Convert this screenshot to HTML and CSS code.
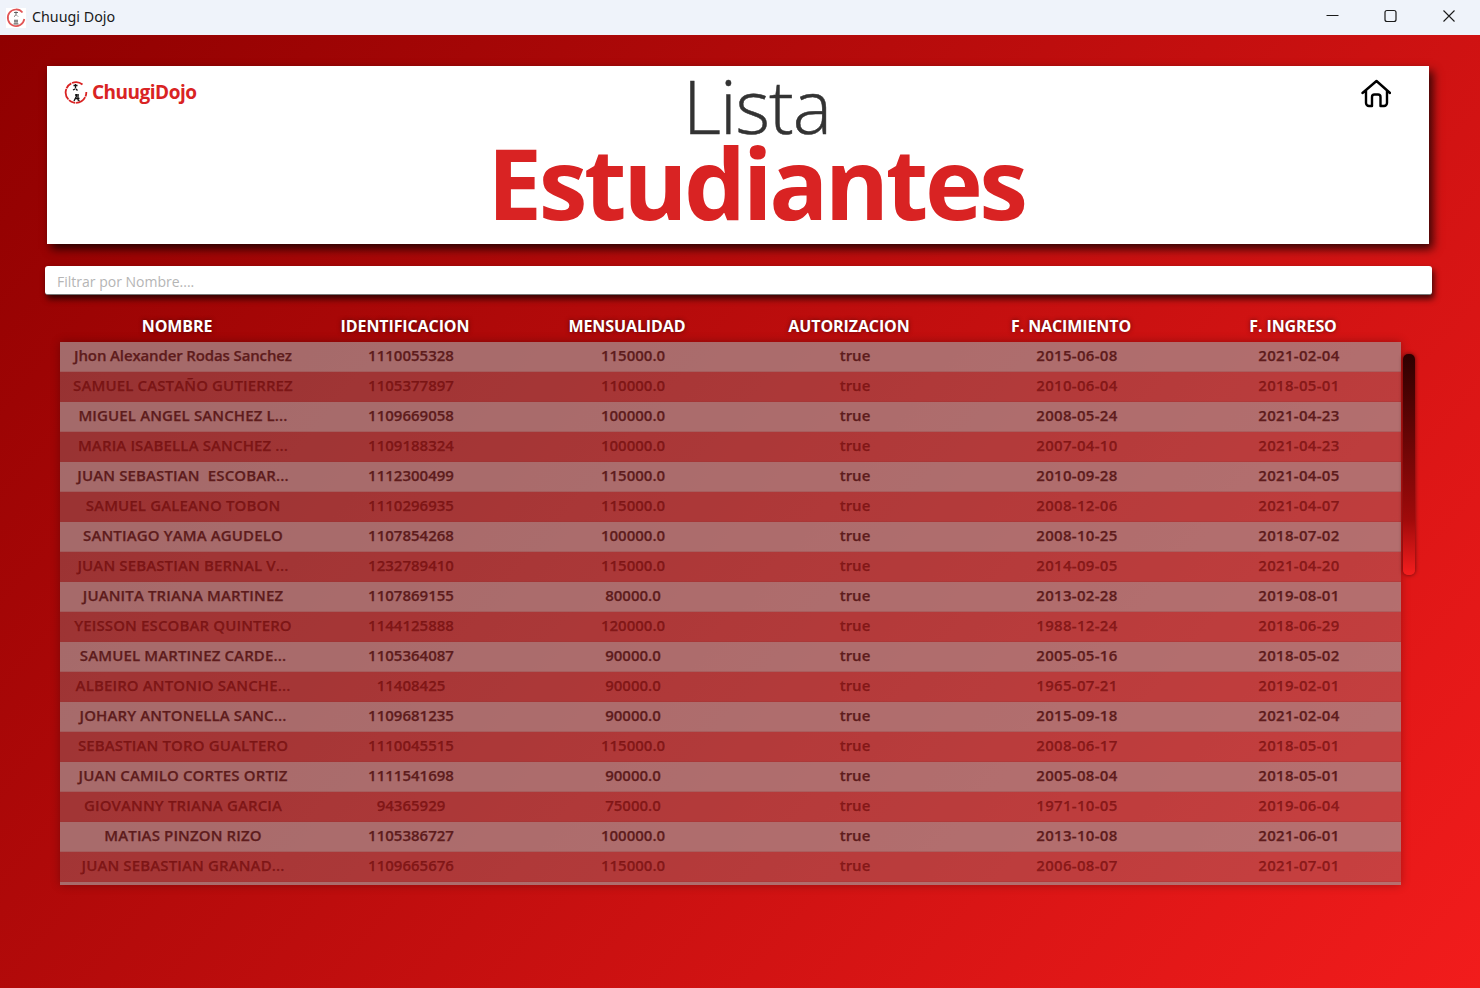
FILE: index.html
```html
<!DOCTYPE html>
<html lang="es">
<head>
<meta charset="utf-8">
<title>Chuugi Dojo</title>
<link rel="stylesheet" href="styles.css">
</head>
<body>
<div class="window">
  <div class="titlebar">
    <div class="app">
      <svg class="app-icon" viewBox="0 0 20 20"><rect width="20" height="20" fill="#fff"/><path d="M16.500 4.500A8.300 8.300 0 1 0 18.300 11" fill="none" stroke="#e25555" stroke-width="1.700"/><path d="M8 4.500h4M10 3.500v4M8 8.500l1.500-1M12 8.500l-1-1M8 13h4M9 11.500v4.500M11 11.500v4.500M7.500 16h5" fill="none" stroke="#555" stroke-width=".9"/></svg>
      <span>Chuugi Dojo</span>
    </div>
    <div class="win-controls">
      <svg class="ctl" viewBox="0 0 58 35"><path d="M22.500 15.500h12" stroke="#1a1a1a" stroke-width="1"/></svg>
      <svg class="ctl" viewBox="0 0 58 35"><rect x="23" y="10.500" width="11" height="11" rx="2" fill="none" stroke="#1a1a1a" stroke-width="1.200"/></svg>
      <svg class="ctl" viewBox="0 0 58 35"><path d="M23.500 10.500l11 11M34.500 10.500l-11 11" stroke="#1a1a1a" stroke-width="1.100"/></svg>
    </div>
  </div>
  <main class="content">
    <header class="hero">
      <div class="brand">
        <svg class="brand-icon" viewBox="0 0 24 24"><path d="M18.500 3.500A10.300 10.300 0 1 0 22.300 11" fill="none" stroke="#d92323" stroke-width="1.800" stroke-dasharray="11 .8 7 .8"/><path d="M9.500 4.500h4M11.500 3v4.500M9 9l2-1M13.500 9.500l-1.500-1.500" fill="none" stroke="#111" stroke-width="1.300"/><path d="M11 14h4M12.500 13v2l-2.500 5M14 15v4l1.500 1M11.500 17.500h4" fill="none" stroke="#111" stroke-width="1.300"/></svg>
        <span>ChuugiDojo</span>
      </div>
      <h1 class="title"><span class="title-light">Lista</span><span class="title-bold">Estudiantes</span></h1>
      <svg class="home" viewBox="0 0 30 30"><path d="M1.500 14 15.500 2 29 14M5 11.500V24a3 3 0 0 0 3 3h3V18a2.500 2.500 0 0 1 2.500-2.500h3.500a2.500 2.500 0 0 1 2.500 2.500v9H23a3 3 0 0 0 3-3V11.500" fill="none" stroke="#000" stroke-width="2.400" stroke-linecap="round" stroke-linejoin="round"/></svg>
    </header>
    <input class="filter" type="text" placeholder="Filtrar por Nombre....">
    <div class="table-head">
      <span>NOMBRE</span><span>IDENTIFICACION</span><span>MENSUALIDAD</span><span>AUTORIZACION</span><span>F. NACIMIENTO</span><span>F. INGRESO</span>
    </div>
    <div class="table-area">
      <div class="table">
        <div class="row"><span>Jhon Alexander Rodas Sanchez</span><span>1110055328</span><span>115000.0</span><span>true</span><span>2015-06-08</span><span>2021-02-04</span></div>
        <div class="row"><span>SAMUEL CASTAÑO GUTIERREZ</span><span>1105377897</span><span>110000.0</span><span>true</span><span>2010-06-04</span><span>2018-05-01</span></div>
        <div class="row"><span>MIGUEL ANGEL SANCHEZ L...</span><span>1109669058</span><span>100000.0</span><span>true</span><span>2008-05-24</span><span>2021-04-23</span></div>
        <div class="row"><span>MARIA ISABELLA SANCHEZ ...</span><span>1109188324</span><span>100000.0</span><span>true</span><span>2007-04-10</span><span>2021-04-23</span></div>
        <div class="row"><span>JUAN SEBASTIAN  ESCOBAR...</span><span>1112300499</span><span>115000.0</span><span>true</span><span>2010-09-28</span><span>2021-04-05</span></div>
        <div class="row"><span>SAMUEL GALEANO TOBON</span><span>1110296935</span><span>115000.0</span><span>true</span><span>2008-12-06</span><span>2021-04-07</span></div>
        <div class="row"><span>SANTIAGO YAMA AGUDELO</span><span>1107854268</span><span>100000.0</span><span>true</span><span>2008-10-25</span><span>2018-07-02</span></div>
        <div class="row"><span>JUAN SEBASTIAN BERNAL V...</span><span>1232789410</span><span>115000.0</span><span>true</span><span>2014-09-05</span><span>2021-04-20</span></div>
        <div class="row"><span>JUANITA TRIANA MARTINEZ</span><span>1107869155</span><span>80000.0</span><span>true</span><span>2013-02-28</span><span>2019-08-01</span></div>
        <div class="row"><span>YEISSON ESCOBAR QUINTERO</span><span>1144125888</span><span>120000.0</span><span>true</span><span>1988-12-24</span><span>2018-06-29</span></div>
        <div class="row"><span>SAMUEL MARTINEZ CARDE...</span><span>1105364087</span><span>90000.0</span><span>true</span><span>2005-05-16</span><span>2018-05-02</span></div>
        <div class="row"><span>ALBEIRO ANTONIO SANCHE...</span><span>11408425</span><span>90000.0</span><span>true</span><span>1965-07-21</span><span>2019-02-01</span></div>
        <div class="row"><span>JOHARY ANTONELLA SANC...</span><span>1109681235</span><span>90000.0</span><span>true</span><span>2015-09-18</span><span>2021-02-04</span></div>
        <div class="row"><span>SEBASTIAN TORO GUALTERO</span><span>1110045515</span><span>115000.0</span><span>true</span><span>2008-06-17</span><span>2018-05-01</span></div>
        <div class="row"><span>JUAN CAMILO CORTES ORTIZ</span><span>1111541698</span><span>90000.0</span><span>true</span><span>2005-08-04</span><span>2018-05-01</span></div>
        <div class="row"><span>GIOVANNY TRIANA GARCIA</span><span>94365929</span><span>75000.0</span><span>true</span><span>1971-10-05</span><span>2019-06-04</span></div>
        <div class="row"><span>MATIAS PINZON RIZO</span><span>1105386727</span><span>100000.0</span><span>true</span><span>2013-10-08</span><span>2021-06-01</span></div>
        <div class="row"><span>JUAN SEBASTIAN GRANAD...</span><span>1109665676</span><span>115000.0</span><span>true</span><span>2006-08-07</span><span>2021-07-01</span></div>
        <div class="row row-cut"></div>
      </div>
      <div class="scroll-track"><div class="scroll-thumb"></div></div>
    </div>
  </main>
</div>
</body>
</html>
```
FILE: styles.css
```css
* { box-sizing: border-box; }
html, body { margin: 0; height: 100%; }
body { font-family: "Open Sans", "Noto Sans", sans-serif; background: #fff; overflow: hidden; }
.window { width: 1480px; height: 988px; display: flex; flex-direction: column; }
.titlebar { height: 35px; background: #eff3fa; display: flex; justify-content: space-between; align-items: stretch; flex: none; }
.app { display: flex; align-items: center; gap: 6px; padding: 0 0 2px 6px; font-size: 14.300px; color: #1a1a1a; font-family: "Noto Sans", sans-serif; }
.app-icon { width: 20px; height: 20px; margin-top: 2px; }
.win-controls { display: flex; padding-right: 2px; }
.ctl { width: 58px; height: 35px; }
.content { flex: 1; background: linear-gradient(130deg, #8f0000 0%, #f21c1c 100%); padding: 31px 48px 0 45px; display: flex; flex-direction: column; }
.hero { position: relative; height: 178px; margin: 0 3px 0 2px; background: #fff; box-shadow: 4px 5px 9px rgba(0,0,0,.75); flex: none; }
.brand { position: absolute; left: 17px; top: 13px; display: flex; align-items: center; gap: 4px; color: #d92323; font-weight: 700; font-size: 19px; letter-spacing: -.5px; }
.brand-icon { width: 24px; height: 24px; margin-top: 2px; }
.title { margin: 0; display: flex; flex-direction: column; align-items: center; font-weight: 400; padding-left: 36px; }
.title-light { font-weight: 300; font-size: 74px; line-height: 66px; padding-top: 7px; padding-left: 2px; color: #333; letter-spacing: -1px; -webkit-text-stroke: .5px #333; }
.title-bold { font-weight: 700; font-size: 98px; line-height: 86px; color: #d92323; letter-spacing: -3.450px; }
.home { position: absolute; left: 1314px; top: 13px; width: 30px; height: 30px; }
.filter { margin-top: 22px; height: 29px; width: 1387px; flex: none; border: 0; border-bottom: 1px solid #777; border-radius: 3px; background: #fff; padding: 2px 12px 0; font: 14px "Open Sans", sans-serif; box-shadow: 2px 4px 6px rgba(0,0,0,.7); outline: 0; }
.filter::placeholder { color: #b5b5b5; opacity: 1; }
.table-head { margin-top: 21px; margin-left: 15px; display: grid; grid-template-columns: 234px repeat(5, 222px); height: 26px; text-align: center; color: #fff; font-weight: 700; font-size: 16px; line-height: 21px; text-shadow: 0 0 4px rgba(0,0,0,.5); letter-spacing: -.1px; }
.table-area { position: relative; margin-left: 15px; width: 1341px; height: 543px; flex: none; }
.table { height: 543px; overflow: hidden; box-shadow: 0 0 9px rgba(0,0,0,.28); }
.row { display: grid; grid-template-columns: 234px repeat(5, 222px); padding-left: 6px; height: 30px; line-height: 26px; font-size: 15px; font-weight: 600; text-align: center; white-space: pre; border-bottom: 1px solid rgba(150,50,50,.25); letter-spacing: .13px; -webkit-text-stroke: .25px currentColor; }
.row:first-child span:first-child { letter-spacing: -.13px; }
.row span:nth-child(n+2) { letter-spacing: 0; }
.row span:nth-child(n+5) { letter-spacing: .3px; }
.row:nth-child(odd) { background: rgba(165,140,140,.75); color: #5e1c1c; }
.row:nth-child(even) { background: rgba(140,130,130,.37); color: rgba(100,0,0,.58); }
.scroll-track { position: absolute; left: 1343px; top: 12px; width: 12px; height: 221px; }
.scroll-thumb { height: 100%; border-radius: 5px; background: linear-gradient(180deg, #2e0000 0%, #a00a0a 75%, #f41e1e 100%); box-shadow: 0 0 4px rgba(0,0,0,.6); }
```
